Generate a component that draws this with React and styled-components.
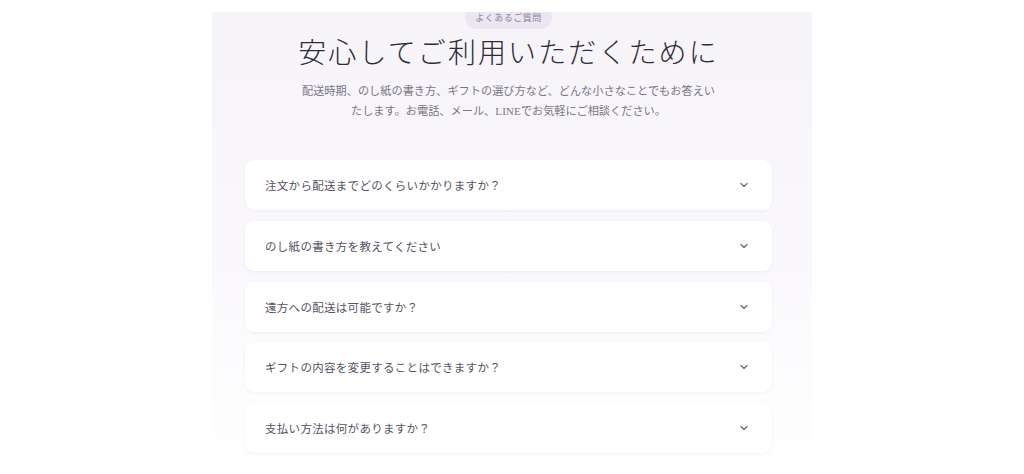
import React from 'react';
import styled, { createGlobalStyle } from 'styled-components';
import { ChevronDown } from 'lucide-react';

const GlobalStyle = createGlobalStyle`
  * {
    box-sizing: border-box;
  }
  body {
    margin: 0;
    background: #ffffff;
    font-family: "Liberation Serif", "Noto Sans CJK JP", serif;
  }
`;

const StyledPage = styled.div`
  height: 474px;
  padding-top: 12px;
  display: flex;
  justify-content: center;
  overflow: hidden;
`;

const StyledSection = styled.section`
  width: 600px;
  padding: 0 40px 40px 33px;
  background: linear-gradient(180deg, #f6f3f9 0%, #faf8fc 55%, #ffffff 100%);
  overflow: hidden;
  display: flex;
  flex-direction: column;
  align-items: center;
`;

const StyledBadge = styled.span`
  margin-top: -6px;
  margin-bottom: 5px;
  padding: 6px 10px 5px;
  border-radius: 999px;
  background: #ece5f2;
  color: #8a8494;
  font-size: 9px;
  line-height: 12px;
  letter-spacing: 0.5px;
`;

const StyledTitle = styled.h2`
  margin: 0;
  color: #2f2c37;
  font-size: 28px;
  font-weight: 300;
  line-height: 39px;
  letter-spacing: 2.1px;
  text-align: center;
`;

const StyledLead = styled.p`
  max-width: 420px;
  margin: 9px 0 0;
  color: #7a7682;
  font-size: 11.2px;
  line-height: 19.5px;
  text-align: center;
`;

const StyledList = styled.div`
  width: 100%;
  margin-top: 39px;
  display: flex;
  flex-direction: column;
  gap: 10.75px;
`;

const StyledItem = styled.button`
  width: 100%;
  height: 50px;
  padding: 0 22px 0 20px;
  display: flex;
  align-items: center;
  justify-content: space-between;
  border: none;
  border-radius: 9px;
  background: #ffffff;
  box-shadow: 0 1px 3px rgba(60, 40, 90, 0.06);
  font-family: inherit;
  cursor: pointer;
`;

const StyledQuestion = styled.span`
  color: #57535f;
  font-size: 11.5px;
  letter-spacing: 0.3px;
`;

const StyledChevron = styled(ChevronDown)`
  width: 12px;
  height: 12px;
  color: #6e6a77;
  stroke-width: 2.5px;
`;

const questions = [
  '注文から配送までどのくらいかかりますか？',
  'のし紙の書き方を教えてください',
  '遠方への配送は可能ですか？',
  'ギフトの内容を変更することはできますか？',
  '支払い方法は何がありますか？',
];

const App = () => (
  <>
    <GlobalStyle />
    <StyledPage>
      <StyledSection>
        <StyledBadge>よくあるご質問</StyledBadge>
        <StyledTitle>安心してご利用いただくために</StyledTitle>
        <StyledLead>
          配送時期、のし紙の書き方、ギフトの選び方など、どんな小さなことでもお答えいたします。お電話、メール、LINEでお気軽にご相談ください。
        </StyledLead>
        <StyledList>
          {questions.map((question) => (
            <StyledItem key={question} type="button">
              <StyledQuestion>{question}</StyledQuestion>
              <StyledChevron />
            </StyledItem>
          ))}
        </StyledList>
      </StyledSection>
    </StyledPage>
  </>
);

export default App;
